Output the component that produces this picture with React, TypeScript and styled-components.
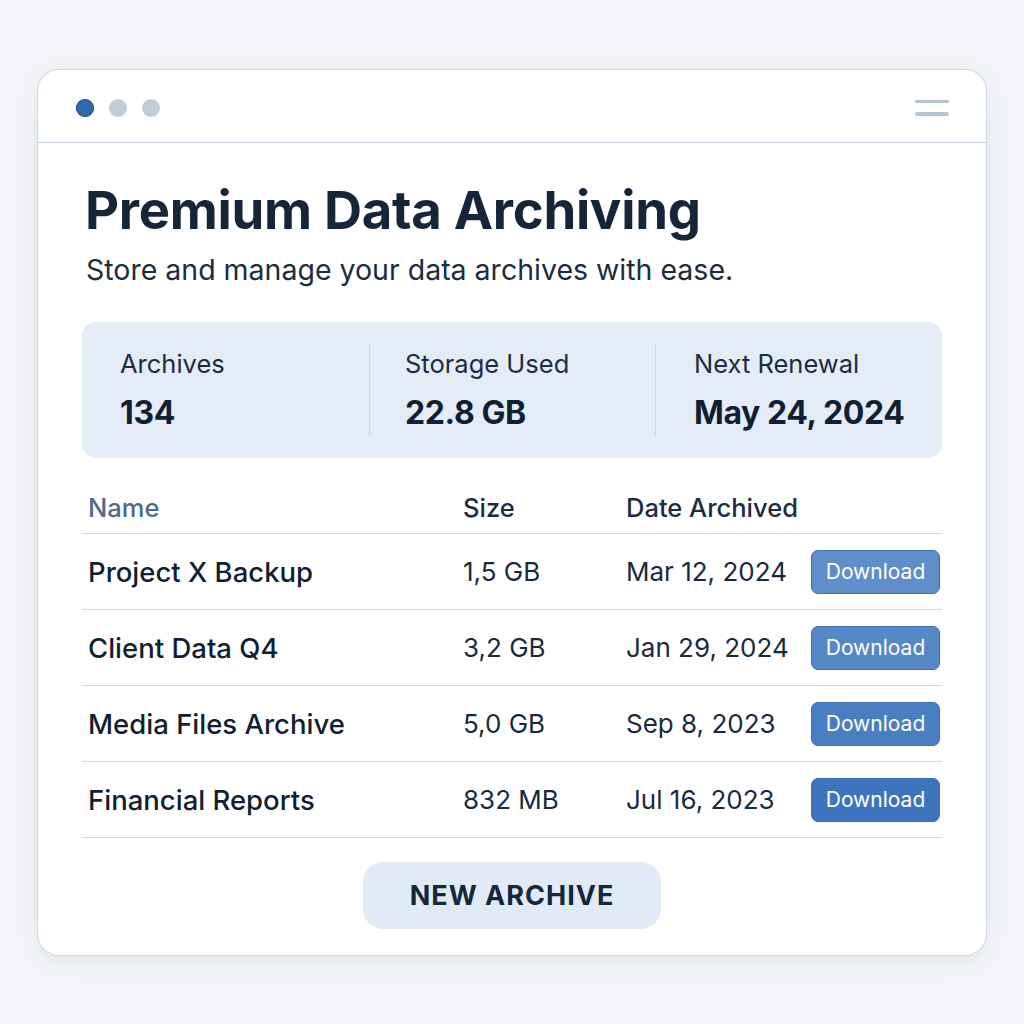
import React from "react";
import styled, { createGlobalStyle } from "styled-components";

const Global = createGlobalStyle`
  html, body { margin: 0; padding: 0; background: #f3f5f8; }
  body { font-family: Inter, "Noto Sans", sans-serif; color: #15263a; }
`;

const Page = styled.div`
  width: 1024px;
  height: 1024px;
  padding: 69px 0 0 37px;
  box-sizing: border-box;
`;

const Card = styled.div`
  width: 950px;
  height: 887px;
  box-sizing: border-box;
  background: #ffffff;
  border: 1.5px solid #cbd7e4;
  border-radius: 22px;
  box-shadow: 0 6px 24px rgba(30, 60, 100, 0.08);
  display: flex;
  flex-direction: column;
  overflow: hidden;
`;

const TopBar = styled.div`
  height: 73px;
  flex: none;
  box-sizing: border-box;
  border-bottom: 1.5px solid #c3d1e0;
  display: flex;
  align-items: center;
  justify-content: space-between;
  padding: 3px 37px 0 38px;
`;

const Dots = styled.div`
  display: flex;
  gap: 15px;
`;

const Dot = styled.span<{ $active?: boolean }>`
  width: 18px;
  height: 18px;
  border-radius: 50%;
  background: ${(p) => (p.$active ? "#3068ae" : "#bfccd9")};
  box-shadow: ${(p) => (p.$active ? "inset 0 0 0 1px #23579c" : "none")};
`;

const Burger = styled.div`
  width: 34px;
  display: flex;
  flex-direction: column;
  gap: 9px;
  span {
    height: 3.5px;
    border-radius: 2px;
    background: #b5c4d4;
  }
`;

const Body = styled.div`
  padding: 36px 44px 0 44px;
  display: flex;
  flex-direction: column;
`;

const Title = styled.h1`
  margin: 0 0 0 3px;
  font-size: 52.7px;
  font-weight: 700;
  line-height: 62px;
  letter-spacing: -0.3px;
  color: #15263a;
`;

const Subtitle = styled.p`
  margin: 12px 0 0 4px;
  font-size: 28.5px;
  line-height: 34px;
  font-weight: 400;
  color: #1d2d40;
`;

const Stats = styled.div`
  margin-top: 35px;
  height: 136px;
  background: #e3ecf7;
  border-radius: 14px;
  display: grid;
  grid-template-columns: 287px 286px 287px;
  align-items: center;
`;

const Stat = styled.div<{ $divider?: boolean; $pad: number }>`
  height: 92px;
  box-sizing: border-box;
  padding-left: ${(p) => p.$pad}px;
  border-left: ${(p) => (p.$divider ? "1px solid #ccd8e6" : "none")};
  display: flex;
  flex-direction: column;
  justify-content: center;
`;

const StatLabel = styled.div`
  font-size: 25.5px;
  line-height: 30px;
  color: #1d2d40;
`;

const StatValue = styled.div`
  margin-top: 16px;
  font-size: 32px;
  line-height: 36px;
  font-weight: 700;
  letter-spacing: -0.4px;
  color: #111f30;
`;

const Table = styled.div`
  margin-top: 28px;
  display: flex;
  flex-direction: column;
`;

const Row = styled.div<{ $head?: boolean }>`
  display: grid;
  grid-template-columns: 381px 163px 185px 131px;
  align-items: center;
  height: ${(p) => (p.$head ? "48px" : "76px")};
  border-bottom: 1.5px solid #c9d6e4;
  box-sizing: border-box;
  padding-bottom: ${(p) => (p.$head ? "4px" : "0")};
`;

const HeadCell = styled.div<{ $muted?: boolean }>`
  font-size: 25.5px;
  font-weight: 500;
  color: ${(p) => (p.$muted ? "#4f6a8b" : "#1d2d40")};
  padding-left: ${(p) => (p.$muted ? "6px" : "0")};
`;

const NameCell = styled.div`
  padding-left: 6px;
  font-size: 27.5px;
  font-weight: 500;
  color: #111f30;
`;

const Cell = styled.div`
  font-size: 26px;
  font-weight: 400;
  color: #1a2a3d;
`;

const DownloadButton = styled.button<{ $shade: string }>`
  width: 129px;
  height: 44px;
  border: 1px solid #3f72b8;
  border-radius: 7px;
  background: ${(p) => p.$shade};
  color: #ffffff;
  font-family: Inter, "Noto Sans", sans-serif;
  font-size: 21px;
  font-weight: 400;
  padding: 0;
  cursor: pointer;
`;

const Footer = styled.div`
  display: flex;
  justify-content: center;
  padding-top: 24px;
`;

const NewButton = styled.button`
  width: 298px;
  height: 67px;
  border: none;
  border-radius: 20px;
  background: #e1ebf7;
  color: #14283c;
  font-family: Inter, "Noto Sans", sans-serif;
  font-size: 27px;
  font-weight: 700;
  letter-spacing: 1px;
  cursor: pointer;
`;

const rows = [
  { name: "Project X Backup", size: "1,5 GB", date: "Mar 12, 2024", shade: "#5f8ecb" },
  { name: "Client Data Q4", size: "3,2 GB", date: "Jan 29, 2024", shade: "#5688c8" },
  { name: "Media Files Archive", size: "5,0 GB", date: "Sep 8, 2023", shade: "#4a7ec3" },
  { name: "Financial Reports", size: "832 MB", date: "Jul 16, 2023", shade: "#3e74bd" },
];

export default function App() {
  return (
    <Page>
      <Global />
      <Card>
        <TopBar>
          <Dots>
            <Dot $active />
            <Dot />
            <Dot />
          </Dots>
          <Burger>
            <span />
            <span />
          </Burger>
        </TopBar>
        <Body>
          <Title>Premium Data Archiving</Title>
          <Subtitle>Store and manage your data archives with ease.</Subtitle>
          <Stats>
            <Stat $pad={38}>
              <StatLabel>Archives</StatLabel>
              <StatValue>134</StatValue>
            </Stat>
            <Stat $divider $pad={35}>
              <StatLabel>Storage Used</StatLabel>
              <StatValue>22.8 GB</StatValue>
            </Stat>
            <Stat $divider $pad={38}>
              <StatLabel>Next Renewal</StatLabel>
              <StatValue>May 24, 2024</StatValue>
            </Stat>
          </Stats>
          <Table>
            <Row $head>
              <HeadCell $muted>Name</HeadCell>
              <HeadCell>Size</HeadCell>
              <HeadCell>Date Archived</HeadCell>
              <div />
            </Row>
            {rows.map((r) => (
              <Row key={r.name}>
                <NameCell>{r.name}</NameCell>
                <Cell>{r.size}</Cell>
                <Cell>{r.date}</Cell>
                <DownloadButton $shade={r.shade}>Download</DownloadButton>
              </Row>
            ))}
          </Table>
          <Footer>
            <NewButton>NEW ARCHIVE</NewButton>
          </Footer>
        </Body>
      </Card>
    </Page>
  );
}
